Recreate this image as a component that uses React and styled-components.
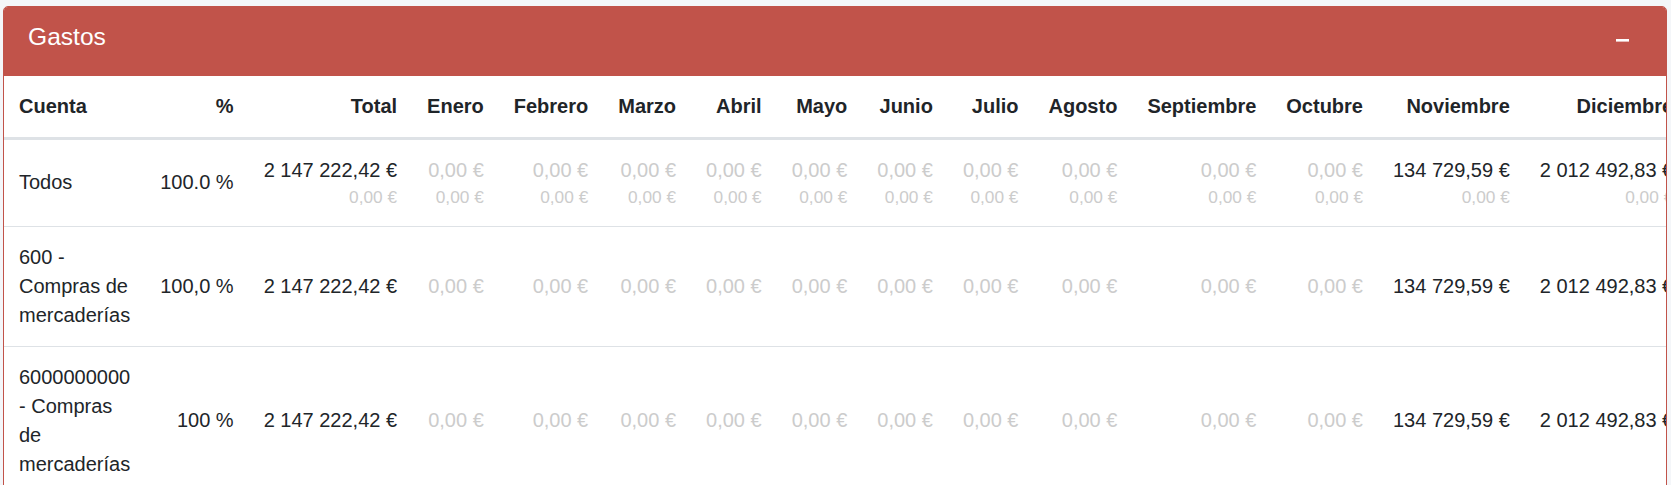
import React from 'react';
import styled, {createGlobalStyle} from "styled-components";

const GlobalStyle = createGlobalStyle`
  html, body {
    margin: 0;
    overflow: hidden;
    background: #f4f6f9;
  }
  body {
    font-family: "Liberation Sans", Arial, sans-serif;
    color: #212529;
  }
`

const Page = styled.div`
  padding: 6px 4px 0 3px;
`

const Card = styled.section`
  background: #fff;
  border: 1px solid #c1534a;
  border-radius: 5px;
  overflow: hidden;
`

const CardHeader = styled.header`
  display: flex;
  justify-content: space-between;
  align-items: flex-start;
  box-sizing: border-box;
  height: 69px;
  padding: 16px 37px 0 24px;
  background: #c1534a;
`

const CardTitle = styled.h3`
  margin: 0;
  font-size: 24.6px;
  line-height: 27.5px;
  font-weight: 400;
  color: #fff;
`

const ToolButton = styled.button`
  display: flex;
  margin-top: 16px;
  padding: 0;
  border: 0;
  background: none;
  cursor: pointer;
`

const TableScroll = styled.div`
  overflow-x: auto;
`

const Table = styled.table`
  width: 100%;
  border-collapse: separate;
  border-spacing: 0;
  font-size: 20px;
  line-height: 29.15px;
`

const Th = styled.th`
  padding: 15.8px 15px;
  font-weight: 700;
  text-align: ${p => p.$left ? 'left' : 'right'};
  white-space: nowrap;
  vertical-align: bottom;
  border-bottom: 2px solid #dee2e6;
  color: #1f2529;
`

const Td = styled.td`
  padding: 15.8px 15px;
  text-align: ${p => p.$left ? 'left' : 'right'};
  white-space: ${p => p.$left ? 'normal' : 'nowrap'};
  vertical-align: middle;
  border-top: 1px solid #dee2e6;
`

const Amount = styled.span`
  color: ${p => p.$muted ? '#cccccc' : '#212529'};
`

const SubAmount = styled.div`
  font-size: 17.3px;
  line-height: 25.3px;
  color: #cccccc;
`

const months = ['Enero', 'Febrero', 'Marzo', 'Abril', 'Mayo', 'Junio', 'Julio', 'Agosto',
    'Septiembre', 'Octubre', 'Noviembre', 'Diciembre']

const ZERO = '0,00 €'
const monthValues = [ZERO, ZERO, ZERO, ZERO, ZERO, ZERO, ZERO, ZERO, ZERO, ZERO, '134 729,59 €', '2 012 492,83 €']

const rows = [
    {cuenta: 'Todos', pct: '100.0 %', total: '2 147 222,42 €', sub: true},
    {cuenta: '600 - Compras de mercaderías', pct: '100,0 %', total: '2 147 222,42 €'},
    {cuenta: '6000000000 - Compras de mercaderías', pct: '100 %', total: '2 147 222,42 €'},
]

const MinusIcon = () => (
    <svg width="13" height="3" viewBox="0 0 13 3">
        <rect x="0" y="0" width="13" height="2.6" fill="#fff"/>
    </svg>
)

const App = () => {
    return (
        <>
            <GlobalStyle/>
            <Page>
                <Card>
                    <CardHeader>
                        <CardTitle>Gastos</CardTitle>
                        <ToolButton type="button" aria-label="Minimizar"><MinusIcon/></ToolButton>
                    </CardHeader>
                    <TableScroll>
                        <Table>
                            <thead>
                            <tr>
                                <Th $left>Cuenta</Th>
                                <Th>%</Th>
                                <Th>Total</Th>
                                {months.map(m => <Th key={m}>{m}</Th>)}
                            </tr>
                            </thead>
                            <tbody>
                            {rows.map(row => (
                                <tr key={row.cuenta}>
                                    <Td $left>{row.cuenta}</Td>
                                    <Td>{row.pct}</Td>
                                    <Td>
                                        <Amount>{row.total}</Amount>
                                        {row.sub && <SubAmount>{ZERO}</SubAmount>}
                                    </Td>
                                    {monthValues.map((v, i) => (
                                        <Td key={months[i]}>
                                            <Amount $muted={v === ZERO}>{v}</Amount>
                                            {row.sub && <SubAmount>{ZERO}</SubAmount>}
                                        </Td>
                                    ))}
                                </tr>
                            ))}
                            </tbody>
                        </Table>
                    </TableScroll>
                </Card>
            </Page>
        </>
    );
};

export default App;
